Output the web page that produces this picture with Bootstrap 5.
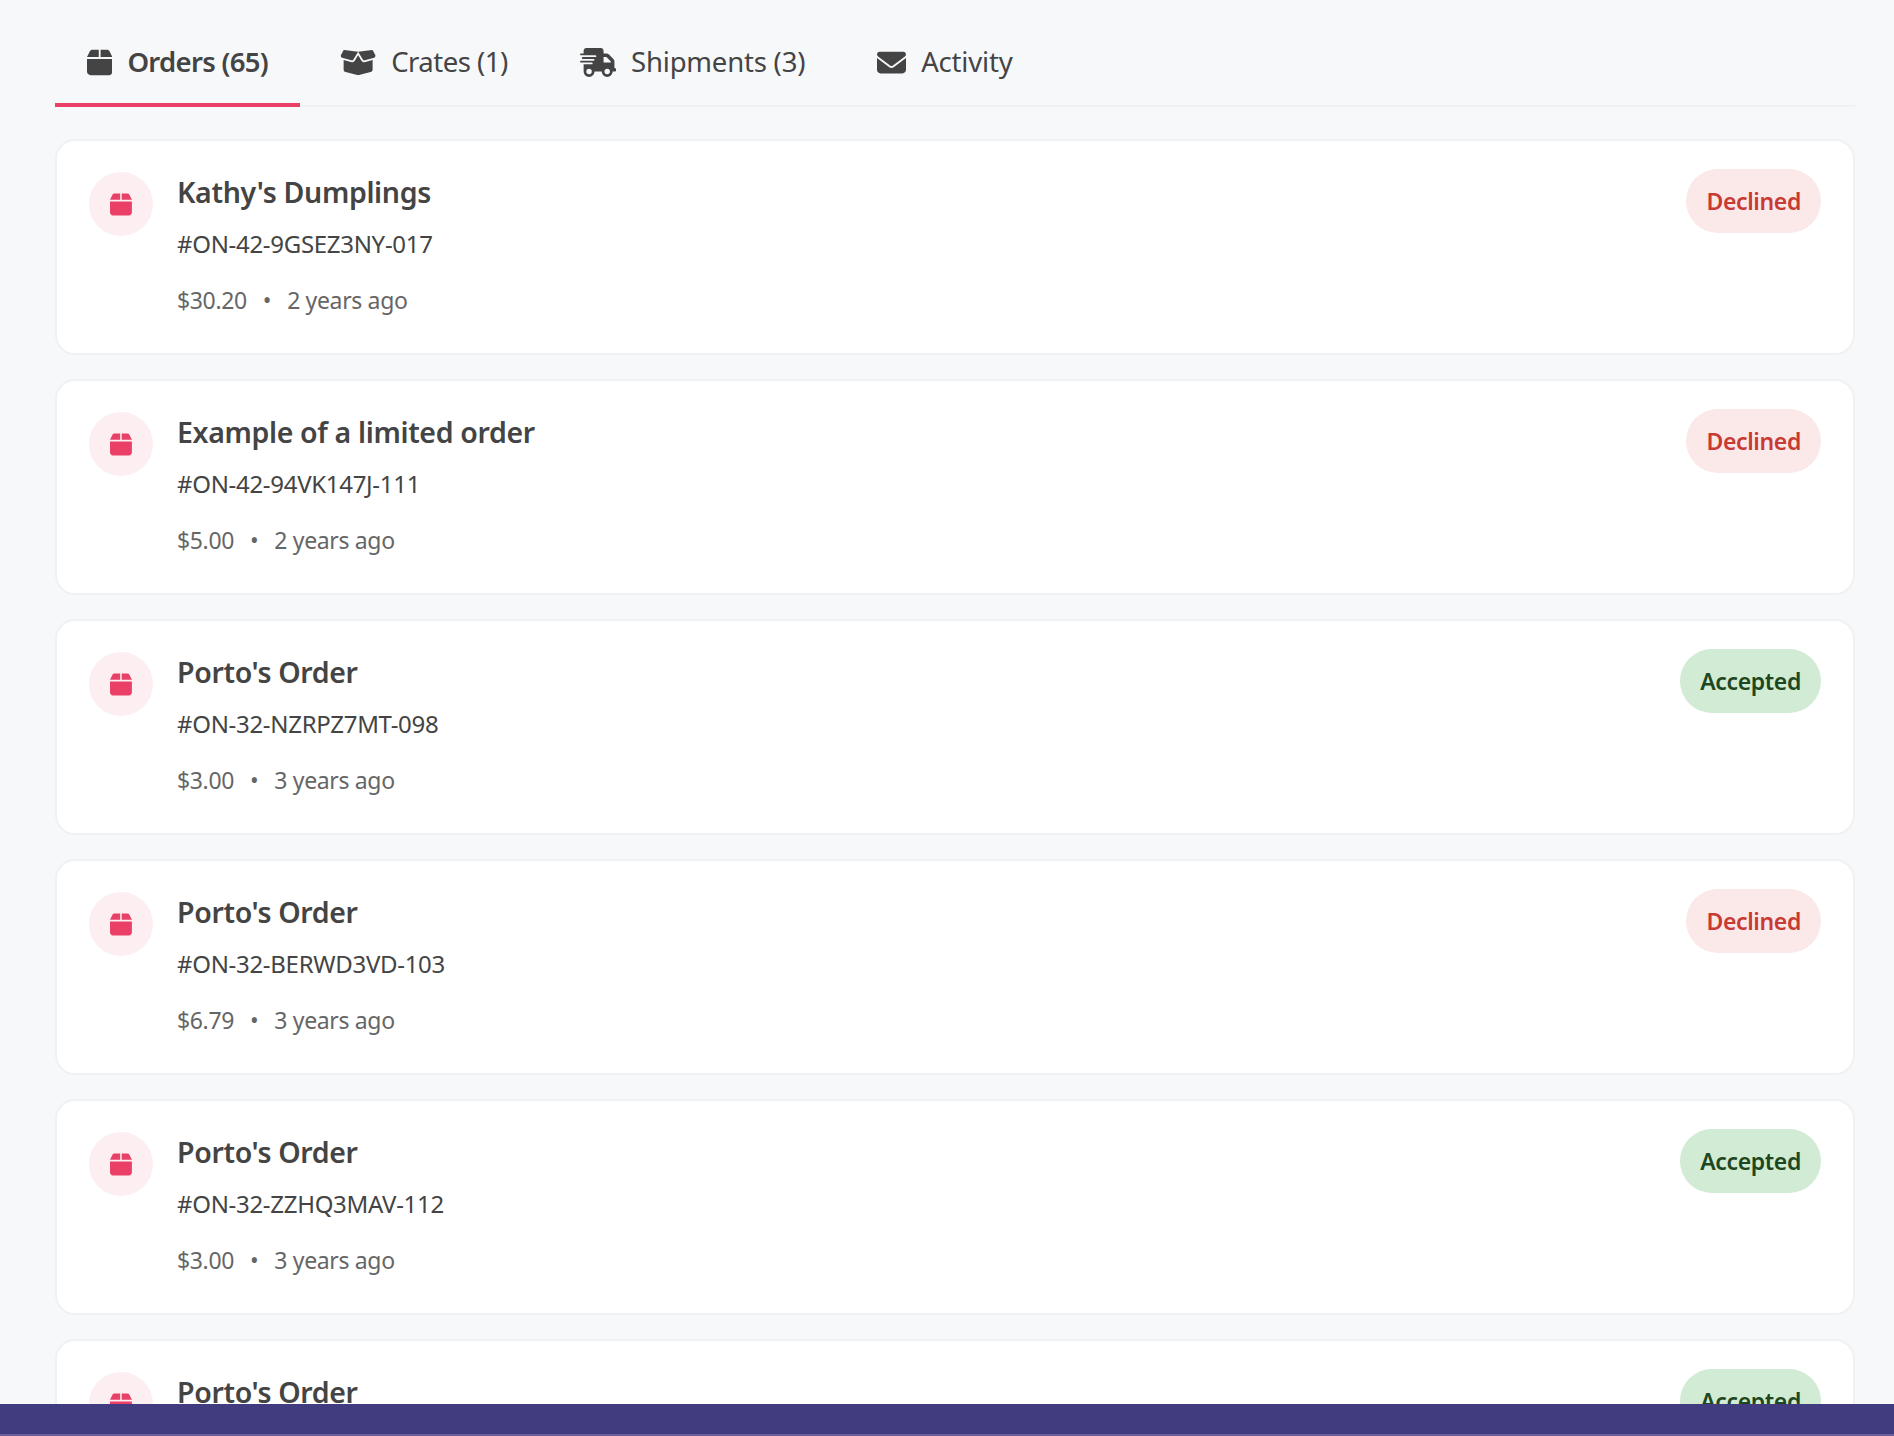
<!DOCTYPE html>
<html lang="en">
<head>
    <meta charset="UTF-8">
    <meta name="viewport" content="width=device-width, initial-scale=1.0">
    <title>Orders</title>

    <link href="https://cdn.jsdelivr.net/npm/bootstrap@5.3.3/dist/css/bootstrap.min.css" rel="stylesheet">
    <style>
        html, body { height: 100%; overflow: hidden; }
        body { background: #f7f8fa; color: #444; font-family: "Noto Sans", "Open Sans", sans-serif; }

        .page-wrap { padding: 21px 39px 0 55px; }

        .tab-bar { height: 86px; border-bottom: 2px solid #f0f1f3; gap: 8px; }
        .tab-link { padding: 0 32px; height: 86px; margin-bottom: -2px; border-bottom: 4px solid transparent; color: #444; font-size: 27.5px; letter-spacing: -.2px; gap: 15px; text-decoration: none; }
        .tab-link svg { height: 29px; fill: #444; flex: none; }
        .tab-link.active { border-bottom-color: #ea4068; font-weight: 600; letter-spacing: -.7px; }
        .tab-tight { letter-spacing: -.5px; }

        .order-card { height: 216px; margin-top: 32px; margin-bottom: -8px; padding: 31px 32px; border: 2px solid #f0f1f3; border-radius: 20px; background: #fff; }
        .order-icon { width: 64px; height: 64px; background: #fdeef1; }
        .order-icon svg { height: 25px; fill: #ea4068; }
        .order-title { font-size: 28.5px; line-height: 40px; font-weight: 600; color: #444; letter-spacing: -.35px; }
        .order-code { font-size: 24px; line-height: 36px; margin-top: 14px; color: #444; letter-spacing: -.3px; }
        .order-meta { font-size: 23px; line-height: 36px; margin-top: 20px; color: #666; letter-spacing: -.35px; }
        .meta-dot { margin: 0 16px; }
        .order-state { height: 64px; padding: 0 20px; margin-top: -3px; font-size: 23px; font-weight: 600; letter-spacing: -.35px; }
        .state-declined { background: #fae9e8; color: #c93a35; }
        .state-accepted { background: #d2ebd5; color: #1e4620; }

        .bottom-strip { height: 32px; background: #413b7f; border-bottom: 2px solid #6a5f96; }
    </style>
</head>
<body>

    <div class="page-wrap">
        <!-- Tabs -->
        <nav class="tab-bar d-flex align-items-center">
            <a class="tab-link active d-flex align-items-center" href="#">
                <svg viewBox="0 0 448 512"><path d="M50.7 58.5L0 160H208V32H93.7C75.5 32 58.9 42.3 50.7 58.5zM240 160H448L397.3 58.5C389.1 42.3 372.5 32 354.3 32H240V160zm208 32H0V416c0 35.3 28.7 64 64 64H384c35.3 0 64-28.7 64-64V192z"/></svg>
                <span>Orders (65)</span>
            </a>
            <a class="tab-link tab-tight d-flex align-items-center" href="#">
                <svg viewBox="0 0 640 512"><path d="M58.9 42.1c3-6.1 9.6-9.6 16.3-8.7L320 64 564.8 33.4c6.7-.8 13.3 2.7 16.3 8.7l41.7 83.4c9 17.9-.6 39.6-19.8 45.1L439.6 217.3c-13.9 4-28.8-1.9-36.2-14.3L320 64 236.6 203c-7.4 12.4-22.3 18.3-36.2 14.3L37.1 170.6c-19.3-5.5-28.8-27.2-19.8-45.1L58.9 42.1zM321.1 128l54.9 91.4c14.9 24.8 44.6 36.6 72.5 28.6L576 211.6v167c0 22-15 41.2-36.4 46.6l-204.1 51c-10.2 2.6-20.9 2.6-31 0l-204.1-51C79 419.7 64 400.5 64 378.5v-167L191.6 248c27.8 8 57.6-3.8 72.5-28.6L318.9 128h2.2z"/></svg>
                <span>Crates (1)</span>
            </a>
            <a class="tab-link d-flex align-items-center" href="#">
                <svg viewBox="0 0 640 512"><path d="M112 0C85.5 0 64 21.5 64 48V96H16c-8.8 0-16 7.2-16 16s7.2 16 16 16H64 272c8.8 0 16 7.2 16 16s-7.2 16-16 16H64 48c-8.8 0-16 7.2-16 16s7.2 16 16 16H64 240c8.8 0 16 7.2 16 16s-7.2 16-16 16H64 16c-8.8 0-16 7.2-16 16s7.2 16 16 16H64 208c8.8 0 16 7.2 16 16s-7.2 16-16 16H64V416c0 53 43 96 96 96s96-43 96-96H384c0 53 43 96 96 96s96-43 96-96h32c17.7 0 32-14.3 32-32s-14.3-32-32-32V288 256 237.3c0-17-6.7-33.3-18.7-45.3L512 114.7c-12-12-28.3-18.7-45.3-18.7H416V48c0-26.5-21.5-48-48-48H112zM544 237.3V256H416V160h50.7L544 237.3zM160 368a48 48 0 1 1 0 96 48 48 0 1 1 0-96zm272 48a48 48 0 1 1 96 0 48 48 0 1 1 -96 0z"/></svg>
                <span>Shipments (3)</span>
            </a>
            <a class="tab-link d-flex align-items-center" href="#">
                <svg viewBox="0 0 512 512"><path d="M48 64C21.5 64 0 85.5 0 112c0 15.1 7.1 29.3 19.2 38.4L236.8 313.6c11.4 8.5 27 8.5 38.4 0L492.8 150.4c12.1-9.1 19.2-23.3 19.2-38.4c0-26.5-21.5-48-48-48H48zM0 176V384c0 35.3 28.7 64 64 64H448c35.3 0 64-28.7 64-64V176L294.4 339.2c-22.8 17.1-54 17.1-76.8 0L0 176z"/></svg>
                <span>Activity</span>
            </a>
        </nav>

        <!-- Order list, filled from the data below -->
        <div id="order-list"></div>
    </div>

    <div class="bottom-strip fixed-bottom"></div>

    <script src="https://cdn.jsdelivr.net/npm/bootstrap@5.3.3/dist/js/bootstrap.bundle.min.js"></script>
    <script>
        const orders = [
            { title: "Kathy's Dumplings", code: '#ON-42-9GSEZ3NY-017', price: '$30.20', age: '2 years ago', state: 'Declined' },
            { title: 'Example of a limited order', code: '#ON-42-94VK147J-111', price: '$5.00', age: '2 years ago', state: 'Declined' },
            { title: "Porto's Order", code: '#ON-32-NZRPZ7MT-098', price: '$3.00', age: '3 years ago', state: 'Accepted' },
            { title: "Porto's Order", code: '#ON-32-BERWD3VD-103', price: '$6.79', age: '3 years ago', state: 'Declined' },
            { title: "Porto's Order", code: '#ON-32-ZZHQ3MAV-112', price: '$3.00', age: '3 years ago', state: 'Accepted' },
            { title: "Porto's Order", state: 'Accepted' }  // rest of this row is below the fold
        ];

        const boxIcon = '<svg viewBox="0 0 448 512"><path d="M50.7 58.5L0 160H208V32H93.7C75.5 32 58.9 42.3 50.7 58.5zM240 160H448L397.3 58.5C389.1 42.3 372.5 32 354.3 32H240V160zm208 32H0V416c0 35.3 28.7 64 64 64H384c35.3 0 64-28.7 64-64V192z"/></svg>';

        document.getElementById('order-list').innerHTML = orders.map(order => `
            <div class="order-card d-flex align-items-start">
                <div class="order-icon rounded-circle d-flex align-items-center justify-content-center flex-shrink-0 me-4">${boxIcon}</div>
                <div class="flex-grow-1">
                    <div class="order-title">${order.title}</div>
                    ${order.code ? `<div class="order-code">${order.code}</div>
                    <div class="order-meta">${order.price}<span class="meta-dot">&bull;</span>${order.age}</div>` : ''}
                </div>
                <span class="order-state rounded-pill d-flex align-items-center state-${order.state.toLowerCase()}">${order.state}</span>
            </div>`).join('');
    </script>
</body>
</html>
